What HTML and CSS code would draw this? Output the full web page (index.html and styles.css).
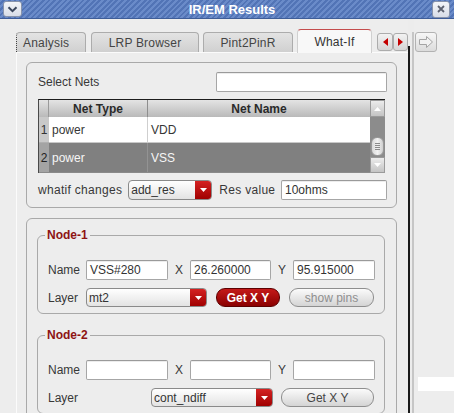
FILE: index.html
```html
<!DOCTYPE html>
<html>
<head>
<meta charset="utf-8">
<title>IR/EM Results</title>
<link rel="stylesheet" href="styles.css">
</head>
<body>
<div class="titlebar">
  <span class="tb-btn menu"><svg width="11" height="7" viewBox="0 0 11 7"><path d="M1.5 1.2 L5.5 5.2 L9.5 1.2" fill="none" stroke="#3a465c" stroke-width="2"/></svg></span>
  <span class="title">IR/EM Results</span>
  <span class="tb-btn close"><svg width="8" height="8" viewBox="0 0 8 8"><path d="M1 1L7 7M7 1L1 7" stroke="#5d6270" stroke-width="1.8"/></svg></span>
</div>
<div class="client">
  <div class="leftpane">
    <div class="tabbar">
      <div class="tab t1">Analysis</div>
      <div class="tab t2">LRP Browser</div>
      <div class="tab t3">Pint2PinR</div>
      <div class="tab t4 active">What-If</div>
      <div class="arrbtn a1"><svg width="5" height="8" viewBox="0 0 5 8"><polygon points="5,0 0,4 5,8" fill="#c40000"/></svg></div>
      <div class="arrbtn a2"><svg width="5" height="8" viewBox="0 0 5 8"><polygon points="0,0 5,4 0,8" fill="#c40000"/></svg></div>
    </div>
    <div class="page">
      <div class="group g1">
        <div class="row">
          <span class="lbl">Select Nets</span>
          <div class="input w-sel"></div>
        </div>
        <div class="table">
          <div class="grid">
            <div class="hd corner"></div>
            <div class="hd">Net Type</div>
            <div class="hd">Net Name</div>
            <div class="num n1">1</div>
            <div class="cell r1 c1">power</div>
            <div class="cell r1">VDD</div>
            <div class="num n2">2</div>
            <div class="cell r2 c1">power</div>
            <div class="cell r2">VSS</div>
          </div>
          <div class="vscroll">
            <div class="sb-btn up"><svg width="7" height="4" viewBox="0 0 7 4"><polygon points="0,4 3.5,0 7,4" fill="#fff"/></svg></div>
            <div class="sb-track">
              <div class="thumb"><span></span><span></span><span></span><span></span></div>
            </div>
            <div class="sb-btn down"><svg width="7" height="4" viewBox="0 0 7 4"><polygon points="0,0 7,0 3.5,4" fill="#fff"/></svg></div>
          </div>
        </div>
        <div class="row wrow">
          <span class="lbl wide">whatif changes</span>
          <div class="combo w-add"><span class="val">add_res</span><span class="dd"><svg width="7" height="4" viewBox="0 0 7 4"><polygon points="0,0 7,0 3.5,4" fill="#fff"/></svg></span></div>
          <span class="lbl res wide">Res value</span>
          <div class="input w-res">10ohms</div>
        </div>
      </div>
      <div class="group g2">
        <fieldset class="node n-1">
          <legend>Node-1</legend>
          <div class="nrow">
            <span class="lbl">Name</span>
            <div class="input">VSS#280</div>
            <span class="lbl c">X</span>
            <div class="input">26.260000</div>
            <span class="lbl c">Y</span>
            <div class="input">95.915000</div>
          </div>
          <div class="lrow">
            <span class="lbl lw">Layer</span>
            <div class="combo w-mt2"><span class="val">mt2</span><span class="dd"><svg width="7" height="4" viewBox="0 0 7 4"><polygon points="0,0 7,0 3.5,4" fill="#fff"/></svg></span></div>
            <div class="btn red w-get1">Get X Y</div>
            <div class="btn dis w-show">show pins</div>
          </div>
        </fieldset>
        <fieldset class="node n-2">
          <legend>Node-2</legend>
          <div class="nrow">
            <span class="lbl">Name</span>
            <div class="input"></div>
            <span class="lbl c">X</span>
            <div class="input"></div>
            <span class="lbl c">Y</span>
            <div class="input"></div>
          </div>
          <div class="lrow">
            <span class="lbl lw">Layer</span>
            <div class="combo w-cont"><span class="val">cont_ndiff</span><span class="dd"><svg width="7" height="4" viewBox="0 0 7 4"><polygon points="0,0 7,0 3.5,4" fill="#fff"/></svg></span></div>
            <div class="btn w-get2">Get X Y</div>
          </div>
        </fieldset>
      </div>
    </div>
  </div>
  <div class="splitter"></div>
  <div class="rightpane">
    <div class="fwd"><svg width="16" height="14" viewBox="0 0 16 14"><path d="M1.5 4.5 H8.5 V1.5 L14.5 7 L8.5 12.5 V9.5 H1.5 Z" fill="#f2f2f2" stroke="#a4a4a4" stroke-width="1"/></svg></div>
    <div class="strip"></div>
  </div>
</div>
</body>
</html>
```

FILE: styles.css
```css
* { box-sizing: border-box; }
html, body { margin: 0; padding: 0; }
body {
  width: 454px;
  height: 413px;
  overflow: hidden;
  background: #ededed;
  font-family: "Liberation Sans", Arial, sans-serif;
  font-size: 12px;
  color: #363636;
}

/* title bar */
.titlebar {
  height: 19px;
  display: flex;
  align-items: center;
  padding: 0 3px 0 3px;
  background: repeating-linear-gradient(135deg, #6a8bc9 0 2px, #5274b6 2px 4px);
  border-bottom: 1px solid #3e5d98;
}
.tb-btn {
  width: 19px;
  height: 16px;
  border: 1px solid #8793ab;
  border-radius: 3px;
  background: linear-gradient(#f3f5f9, #d8dde7);
  display: flex;
  align-items: center;
  justify-content: center;
}
.tb-btn.close { width: 18px; height: 17px; margin-right: 1px; }
.title {
  flex: 1;
  text-align: center;
  padding-left: 10px;
  color: #fff;
  font-weight: bold;
  font-size: 13px;
}

/* client */
.client { display: flex; height: 394px; overflow: hidden; }
.leftpane { width: 408px; padding-top: 10px; }

.tabbar {
  display: flex;
  align-items: flex-end;
  height: 23px;
  padding-left: 16px;
}
.tab {
  height: 20px;
  border: 1px solid #acacac;
  border-bottom: none;
  border-radius: 4px 4px 0 0;
  background: linear-gradient(#e3e3e3, #d0d0d0);
  display: flex;
  align-items: center;
  justify-content: center;
  color: #444;
  font-size: 12px;
  letter-spacing: 0.2px;
}
.t1 { width: 70px; border-left: 1px dotted #444; justify-content: flex-start; padding-left: 6px; }
.t2 { width: 108px; margin-left: 5px; }
.t3 { width: 90px; margin-left: 4px; }
.t4 { width: 75px; margin-left: 4px; }
.tab.active {
  height: 24px;
  margin-bottom: -1px;
  background: #f8f8f8;
  border-color: #d0d0d0;
  border-top: 1px solid #c44c4c;
  position: relative;
  color: #333;
}
.arrbtn {
  width: 16px;
  height: 18px;
  margin-bottom: 1px;
  border: 1px solid #acacac;
  border-radius: 3px;
  background: linear-gradient(#f2f2f2, #d6d6d6);
  display: flex;
  align-items: center;
  justify-content: center;
}
.a1 { margin-left: 5px; }
.a2 { width: 15px; }

.page {
  margin-left: 16px;
  width: 392px;
  height: 361px;
  overflow: hidden;
  border-top: 1px solid #fbfbfb;
  border-left: 1px solid #fbfbfb;
  padding: 9px 0 0 9px;
}

.group {
  width: 371px;
  border: 1px solid #a9a9a9;
  border-radius: 6px;
}
.g1 { height: 146px; padding: 9px 9px 0 11px; }
.g2 { height: 210px; margin-top: 10px; padding: 9px 10px 0 10px; }

.row { display: flex; align-items: center; height: 20px; }
.lbl { white-space: nowrap; color: #383838; }
.lbl.wide { letter-spacing: 0.3px; }

.input {
  height: 20px;
  border: 1px solid #a6a6a6;
  border-top-color: #9a9a9a;
  border-radius: 2px;
  background: #fff;
  padding-left: 3px;
  display: flex;
  align-items: center;
  color: #333;
  box-shadow: inset 0 1px 0 #ececec;
}
.w-sel { width: 171px; margin-left: auto; }

/* table */
.table {
  margin-top: 7px;
  width: 347px;
  height: 74px;
  display: flex;
  border-top: 1px solid #1c1c1c;
  border-left: 1px solid #4a4a4a;
  background: #8a8a8a;
}
.grid {
  flex: 1;
  display: grid;
  grid-template-columns: 10px 99px 1fr;
  grid-template-rows: 17px 26px 29px;
  align-content: start;
}
.hd {
  background: linear-gradient(#e4e4e4, #b9b9b9);
  border-right: 1px solid #8e8e8e;
  font-weight: bold;
  color: #2a2a2a;
  display: flex;
  align-items: center;
  justify-content: center;
}
.hd.corner { border-right: 1px solid #9a9a9a; }
.hd:nth-child(3) { border-right: none; }
.num {
  display: flex;
  align-items: center;
  justify-content: center;
  color: #333;
}
.n1 { background: #c9c9c9; border-bottom: 1px solid #b0b0b0; }
.n2 { background: #a4a4a4; color: #222; }
.cell {
  display: flex;
  align-items: center;
  padding-left: 3px;
}
.cell.r1 { background: #fff; border-bottom: 1px solid #c8c8c8; }
.cell.r2 { background: #808080; color: #f6f6f6; }
.cell.r1.c1 { border-right: 1px solid #cfcfcf; }
.cell.r2.c1 { border-right: 1px solid #939393; }

.vscroll {
  width: 15px;
  display: flex;
  flex-direction: column;
  background: #8c8c8c;
}
.sb-btn {
  height: 17px;
  background: linear-gradient(#ececec, #c4c4c4);
  border: 1px solid #9a9a9a;
  display: flex;
  align-items: center;
  justify-content: center;
}
.sb-btn.down { height: 16px; }
.sb-track { flex: 1; display: flex; flex-direction: column; justify-content: flex-end; padding-bottom: 1px; }
.thumb {
  width: 13px;
  height: 19px;
  margin-left: 1px;
  border-radius: 6px;
  border: 1px solid #999;
  background: linear-gradient(90deg, #d8d8d8, #f2f2f2 50%, #cfcfcf);
  display: flex;
  flex-direction: column;
  justify-content: center;
  align-items: center;
  gap: 1px;
}
.thumb span { width: 5px; height: 1px; background: #8a8a8a; }

.wrow { margin-top: 7px; }
.combo {
  height: 20px;
  border: 1px solid #8a8a8a;
  border-radius: 4px;
  background: linear-gradient(#ffffff, #e3e3e3);
  display: flex;
  align-items: stretch;
  overflow: hidden;
}
.combo .val { flex: 1; padding-left: 2px; display: flex; align-items: center; color: #333; }
.combo .dd {
  width: 16px;
  background: linear-gradient(#d42222, #a00000);
  display: flex;
  align-items: center;
  justify-content: center;
}
.w-add { width: 84px; margin-left: 6px; }
.res { margin-left: 7px; }
.w-res { width: 106px; margin-left: auto; }

/* node fieldsets */
.node {
  margin: 0;
  width: 348px;
  border: 1px solid #a9a9a9;
  border-radius: 6px;
  padding: 18px 9px 6px 10px;
}
.node legend {
  padding: 0 2px;
  margin-left: -3px;
  font-weight: bold;
  color: #8e1414;
  font-size: 12px;
}
.n-2 { margin-top: 14px; }
.nrow {
  display: grid;
  grid-template-columns: 38px 82px 22px 81px 22px 82px;
  height: 20px;
  align-items: center;
}
.lbl.c { text-align: center; }
.lrow {
  display: flex;
  align-items: center;
  height: 19px;
  margin-top: 8px;
}
.lw { width: 38px; }
.w-mt2 { width: 121px; height: 19px; }
.w-cont { width: 122px; height: 19px; margin-left: 65px; }

.btn {
  height: 19px;
  border: 1px solid #8e8e8e;
  border-radius: 9px;
  background: linear-gradient(#fbfbfb, #d4d4d4);
  display: flex;
  align-items: center;
  justify-content: center;
  color: #444;
}
.btn.red {
  background: linear-gradient(#c41a1a, #8a0000);
  border-color: #5c0000;
  color: #fff;
  font-weight: bold;
}
.btn.dis { color: #8f8f8f; }
.w-get1 { width: 64px; margin-left: 9px; }
.w-show { width: 85px; margin-left: 9px; }
.w-get2 { width: 93px; margin-left: 8px; }

/* splitter & right pane */
.splitter {
  width: 6px;
  background:
    linear-gradient(#1a1a1a, #1a1a1a) 0 27px / 2px 100% no-repeat,
    linear-gradient(#c6c6c6, #c6c6c6) 4px 13px / 2px 100% no-repeat,
    #ececec;
}
.rightpane { flex: 1; padding-top: 13px; }
.fwd {
  width: 22px;
  height: 20px;
  margin-left: 1px;
  border: 1px solid #b2b2b2;
  border-radius: 3px;
  background: linear-gradient(#f7f7f7, #dcdcdc);
  display: flex;
  align-items: center;
  justify-content: center;
}
.strip { margin: 325px 0 0 4px; height: 14px; background: #fff; }
```
